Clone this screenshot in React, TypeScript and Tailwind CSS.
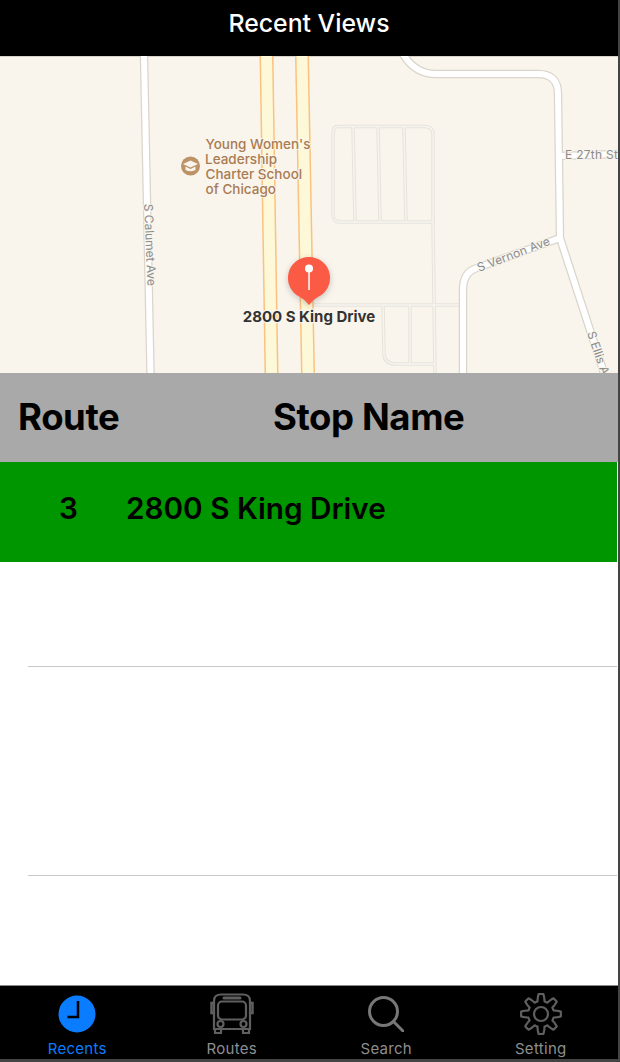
import React from "react";

const gearPath = () => {
  const pts: string[] = [];
  const steps = 160;
  for (let i = 0; i < steps; i++) {
    const a = (i / steps) * Math.PI * 2 - Math.PI / 2;
    const wave = Math.max(-1, Math.min(1, 1.7 * Math.cos(8 * (a + Math.PI / 2))));
    const r = 16.5 + 3.5 * wave;
    pts.push(`${(21 + r * Math.cos(a)).toFixed(2)} ${(21 + r * Math.sin(a)).toFixed(2)}`);
  }
  return "M" + pts.join("L") + "Z";
};

const MapView = () => (
  <svg viewBox="0 56 618 317" className="block w-[618px] h-[317px]" style={{ fontFamily: "Inter, sans-serif" }}>
    <rect x="0" y="56" width="618" height="317" fill="#f9f5ed" />
    <rect x="0" y="56" width="618" height="1" fill="#d8d4ca" />

    {/* small side streets */}
    <g fill="none" stroke="#e6e3dc" strokeWidth="3.5">
      <path d="M338 126.500H425Q433 126.500 433 135V222H340Q333 222 333 214V133Q333 126.500 338 126.500Z" />
      <path d="M353 127L355 222M378 127L380 222M404 127L406 222" />
      <path d="M433 222L435 373M313 305H460" />
      <path d="M383 305L384 355Q385 364 396 364H435M410 305V364" />
    </g>
    <g fill="none" stroke="#f7f4ee" strokeWidth="1.500">
      <path d="M338 126.500H425Q433 126.500 433 135V222H340Q333 222 333 214V133Q333 126.500 338 126.500Z" />
      <path d="M353 127L355 222M378 127L380 222M404 127L406 222" />
      <path d="M433 222L435 373M313 305H460" />
      <path d="M383 305L384 355Q385 364 396 364H435M410 305V364" />
    </g>

    {/* streets */}
    <g fill="none" stroke="#dad5cb" strokeWidth="8.500">
      <path d="M144 56L150.500 373" />
      <path d="M403 54Q415 74 436 74H538Q558 74 558 94L560 238L604 373" />
      <path d="M560 238L477 268Q463 272 463 290V373" />
      <path d="M560 156L618 154" />
    </g>
    <g fill="none" stroke="#ffffff" strokeWidth="6">
      <path d="M144 56L150.500 373" />
      <path d="M403 54Q415 74 436 74H538Q558 74 558 94L560 238L604 373" />
      <path d="M560 238L477 268Q463 272 463 290V373" />
      <path d="M560 156L618 154" />
    </g>

    {/* king drive */}
    <g fill="none" stroke="#fac27e" strokeWidth="14">
      <path d="M266.500 56L271.500 373" />
      <path d="M302 56L308 373" />
    </g>
    <g fill="none" stroke="#fdf9d8" strokeWidth="11">
      <path d="M266.500 56L271.500 373" />
      <path d="M302 56L308 373" />
    </g>

    {/* school */}
    <circle cx="190.500" cy="166" r="9.500" fill="#bc9266" />
    <path d="M183 164L190.500 160.500L198 164L190.500 167.500Z" fill="#f9f5ed" />
    <path d="M185.500 166.500V170Q190.500 172.500 195.500 170V166.500L190.500 169Z" fill="#f9f5ed" />
    <g fill="#a97b52" fontSize="13.500" fontWeight="500" stroke="#f9f5ed" strokeWidth="2" paintOrder="stroke">
      <text x="205.500" y="149">Young Women's</text>
      <text x="205" y="164">Leadership</text>
      <text x="205.500" y="179">Charter School</text>
      <text x="205.500" y="194">of Chicago</text>
    </g>

    {/* street names */}
    <g fill="#8c8c8c" fontSize="12" stroke="#f9f5ed" strokeWidth="2" paintOrder="stroke">
      <text transform="translate(144 204) rotate(87.500)" textLength="82">S Calumet Ave</text>
      <text x="565" y="159" textLength="53">E 27th St</text>
      <text transform="translate(479 272) rotate(-21)" textLength="77">S Vernon Ave</text>
      <text transform="translate(587 333) rotate(71)">S Ellis Ave</text>
    </g>

    {/* pin */}
    <path
      d="M309 257A21 21 0 0 1 318 297Q313 299.500 309 305Q305 299.500 300 297A21 21 0 0 1 309 257Z"
      fill="#fb5a44"
      style={{ filter: "drop-shadow(0 2px 3px rgba(0,0,0,0.2))" }}
    />
    <rect x="308.300" y="268" width="1.500" height="22" fill="#fff" />
    <circle cx="309" cy="268.500" r="4" fill="#fff" />
    <text
      x="309"
      y="321.500"
      textAnchor="middle"
      fontSize="15"
      fontWeight="700"
      fill="#333333"
      stroke="#f9f5ed"
      strokeWidth="2.500"
      paintOrder="stroke"
    >
      2800 S King Drive
    </text>
  </svg>
);

const tabs = ["Recents", "Routes", "Search", "Setting"];

const TabIcon = ({ name }: { name: string }) => {
  if (name === "Recents") {
    return (
      <svg width="38" height="38" viewBox="0 0 38 38">
        <circle cx="19" cy="19" r="18.500" fill="#0a7cff" />
        <path d="M20 6V22H9.500" fill="none" stroke="#000" strokeWidth="2.500" />
      </svg>
    );
  }
  if (name === "Routes") {
    return (
      <svg width="44" height="42" viewBox="0 0 44 42" fill="none" stroke="#5f5f5f" strokeWidth="2.200" strokeLinecap="round">
        <path d="M4 8Q4 1.500 11 1.500H33Q40 1.500 40 8V36H4Z" />
        <rect x="8" y="8.500" width="28" height="18" rx="4" />
        <path d="M14 5H30" strokeWidth="3" />
        <path d="M4 10H1.500V20H4M40 10H42.500V20H40" strokeWidth="2.500" />
        <circle cx="10.500" cy="31" r="3" />
        <circle cx="33.500" cy="31" r="3" />
        <path d="M5 36V40H11V36M33 36V40H39V36" />
      </svg>
    );
  }
  if (name === "Search") {
    return (
      <svg width="36" height="36" viewBox="0 0 36 36" fill="none" stroke="#777" strokeWidth="3" strokeLinecap="round">
        <circle cx="15.500" cy="15.500" r="14" />
        <path d="M25.500 25.500L35 35" />
      </svg>
    );
  }
  return (
    <svg width="42" height="42" viewBox="0 0 42 42" fill="none" stroke="#5f5f5f" strokeWidth="2.200" strokeLinejoin="round">
      <path d={gearPath()} />
      <circle cx="21" cy="21" r="7" />
    </svg>
  );
};

export default function App() {
  return (
    <div className="w-[620px] h-[1062px] overflow-hidden bg-[#444444] pr-[2px] pb-[3px]" style={{ fontFamily: "Inter, sans-serif" }}>
      <div className="flex flex-col h-full bg-white">
        <header className="h-[56px] shrink-0 bg-black flex items-center justify-center pb-[8px] text-white text-[24.800px] font-medium">
          Recent Views
        </header>

        <MapView />

        {/* Table header */}
        <div className="h-[89px] shrink-0 bg-[#a9a9a9] flex items-center text-black text-[36.500px] font-bold tracking-[-0.4px]">
          <div className="ml-[18px] w-[255px]">Route</div>
          <div>Stop Name</div>
        </div>

        {/* Recent stop */}
        <div className="h-[100px] w-[617px] shrink-0 bg-[#009600] flex items-center pb-[7px] text-black text-[29.700px] font-semibold">
          <div className="ml-[59px] w-[67px]">3</div>
          <div>2800 S King Drive</div>
        </div>

        {/* Empty rows */}
        <div className="h-[105px] shrink-0 ml-[28px] mr-[1px] border-b border-[#c8c7cc]" />
        <div className="h-[209px] shrink-0 ml-[28px] mr-[1px] border-b border-[#c8c7cc]" />
        <div className="flex-1" />

        {/* Tab bar */}
        <nav className="h-[74px] shrink-0 bg-black border-t border-[#8a8a8a] grid grid-cols-4">
          {tabs.map((name, i) => (
            <div key={name} className="flex flex-col items-center pt-[3px]">
              <div className="h-[50px] flex items-center justify-center">
                <TabIcon name={name} />
              </div>
              <span className={`text-[15px] tracking-[0.3px] leading-[20px] ${i === 0 ? "text-[#0a7cff]" : "text-[#8e8e8e]"}`}>{name}</span>
            </div>
          ))}
        </nav>
      </div>
    </div>
  );
}
